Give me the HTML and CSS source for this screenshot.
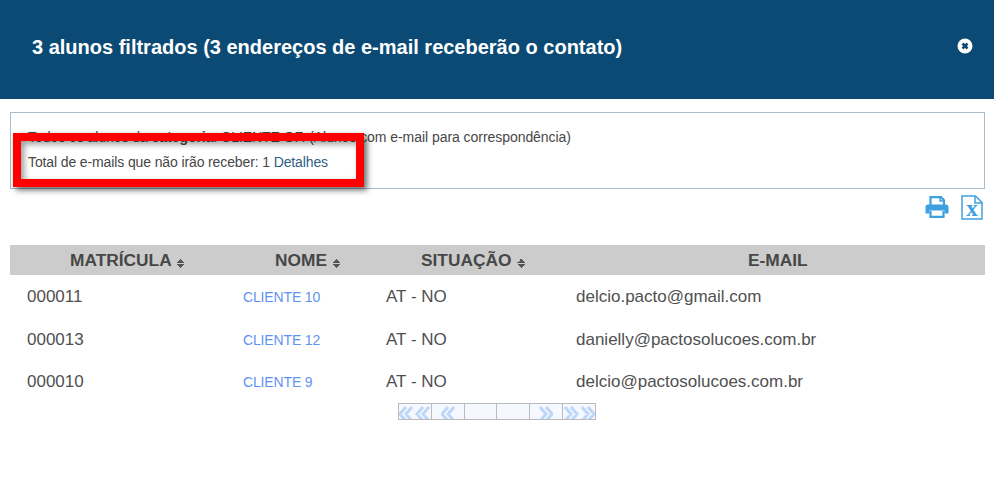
FILE: index.html
```html
<!DOCTYPE html>
<html lang="pt">
<head>
<meta charset="utf-8">
<title>Alunos filtrados</title>
<link rel="stylesheet" href="styles.css">
</head>
<body>
<header class="modal-header">
  <h1 class="modal-title">3 alunos filtrados (3 endereços de e-mail receberão o contato)</h1>
  <svg class="close-icon" viewBox="0 0 16 16" width="16" height="16" aria-label="Fechar">
    <circle cx="8" cy="8" r="7.500" fill="#fff"/>
    <path d="M5.500 5.500l5 5M10.500 5.500l-5 5" stroke="#0a4a75" stroke-width="2.600"/>
  </svg>
</header>
<main class="content">
  <section class="info-box">
    <p class="info-line info-all">Todos os alunos da <b class="info-strong">categoria</b>: CLIENTE OF. (Alunos com e-mail para correspondência)</p>
    <p class="info-line info-total">Total de e-mails que não irão receber: 1 <a class="detail-link" href="#">Detalhes</a></p>
    <div class="highlight"></div>
  </section>
  <div class="toolbar">
    <svg class="tool-icon" viewBox="0 0 24 22" width="24" height="22" aria-label="Imprimir">
      <path d="M5.500 9V1.200h10.500l3 3V9" fill="none" stroke="#3fa0e0" stroke-width="2.200"/>
      <path d="M15 1v4h4" fill="none" stroke="#3fa0e0" stroke-width="1.500"/>
      <path d="M0.500 11a2.500 2.500 0 0 1 2.500-2.500h18a2.500 2.500 0 0 1 2.500 2.500v6.500h-4v-3H4.500v3h-4z" fill="#3fa0e0"/>
      <path d="M5.500 15v5.900h13V15" fill="none" stroke="#3fa0e0" stroke-width="2.200"/>
    </svg>
    <svg class="tool-icon" viewBox="0 0 22 25" width="22" height="25" aria-label="Excel">
      <path d="M1 1h13.500L21 7.500V24H1z" fill="#fff" stroke="#3fa0e0" stroke-width="1.500"/>
      <path d="M14 1v7h7" fill="none" stroke="#3fa0e0" stroke-width="1.500"/>
      <text x="11" y="21" class="excel-x">x</text>
    </svg>
  </div>
  <table class="data-table">
    <thead>
      <tr>
        <th class="col-mat">MATRÍCULA <span class="sort"></span></th>
        <th class="col-nome">NOME <span class="sort"></span></th>
        <th class="col-sit">SITUAÇÃO <span class="sort"></span></th>
        <th class="col-email">E-MAIL</th>
      </tr>
    </thead>
    <tbody>
      <tr><td class="cell-mat">000011</td><td class="cell-nome"><a href="#">CLIENTE 10</a></td><td class="cell-sit">AT - NO</td><td class="cell-email">delcio.pacto@gmail.com</td></tr>
      <tr><td class="cell-mat">000013</td><td class="cell-nome"><a href="#">CLIENTE 12</a></td><td class="cell-sit">AT - NO</td><td class="cell-email">danielly@pactosolucoes.com.br</td></tr>
      <tr><td class="cell-mat">000010</td><td class="cell-nome"><a href="#">CLIENTE 9</a></td><td class="cell-sit">AT - NO</td><td class="cell-email">delcio@pactosolucoes.com.br</td></tr>
    </tbody>
  </table>
  <nav class="pager" aria-label="Paginação">
    <span class="page-btn"><svg class="chev" viewBox="0 0 32 16" width="32" height="16"><path d="M7 3L1 10l6 7M13 3L7 10l6 7M24 3l-6 7 6 7M30 3l-6 7 6 7"/></svg></span>
    <span class="page-btn"><svg class="chev" viewBox="0 0 14 16" width="14" height="16"><path d="M7 3L1 10l6 7M13 3L7 10l6 7"/></svg></span>
    <span class="page-btn"></span>
    <span class="page-btn"></span>
    <span class="page-btn"><svg class="chev" viewBox="0 0 14 16" width="14" height="16"><path d="M1 3l6 7-6 7M7 3l6 7-6 7"/></svg></span>
    <span class="page-btn"><svg class="chev" viewBox="0 0 32 16" width="32" height="16"><path d="M2 3l6 7-6 7M8 3l6 7-6 7M19 3l6 7-6 7M25 3l6 7-6 7"/></svg></span>
  </nav>
</main>
</body>
</html>
```

FILE: styles.css
```css
* { box-sizing: border-box; }
html, body { margin: 0; padding: 0; }
body { background: #fff; font-family: "Liberation Sans", Arial, sans-serif; color: #474747; }

.modal-header {
  height: 99px;
  background: #0a4a75;
  display: flex;
  align-items: center;
  justify-content: space-between;
  padding: 0 21px 5px 32px;
}
.modal-title { margin: 0; color: #fff; font-size: 20px; font-weight: 700; }
.close-icon { display: block; margin-top: -3px; }

.content { padding: 13px 9px 0 10px; }

.info-box {
  position: relative;
  height: 77px;
  border: 1px solid #a8bccd;
  padding: 17px 17px 0;
}
.info-line { margin: 0 0 10px; font-size: 14px; line-height: 15px; color: #474747; }
.info-all { letter-spacing: -0.05px; }
.info-strong { font-weight: 700; }
.info-total { letter-spacing: -0.12px; }
.detail-link { color: #2f5f85; text-decoration: none; }
.highlight {
  position: absolute;
  left: 2px;
  top: 20px;
  width: 351px;
  height: 54px;
  border: 8px solid #f00;
  box-shadow: 3px 3px 6px rgba(0,0,0,.6), inset 3px 3px 6px rgba(0,0,0,.4);
}

.toolbar {
  display: flex;
  justify-content: flex-end;
  align-items: center;
  gap: 12px;
  height: 36px;
  padding-right: 2px;
}
.tool-icon { display: block; }
.excel-x { font: 700 23px "Liberation Serif", serif; fill: #3fa0e0; text-anchor: middle; }

.data-table { width: 100%; margin-top: 20px; border-collapse: collapse; table-layout: fixed; }
.data-table th {
  height: 30px;
  padding: 1px 0 0;
  background: #ccc;
  font-size: 17.330px;
  font-weight: 700;
  color: #474747;
  text-align: left;
}
.col-mat { width: 195px; padding-left: 60px !important; }
.col-nome { width: 160px; padding-left: 70px !important; }
.col-sit { width: 180px; padding-left: 56px !important; }
.col-email { padding-left: 203px !important; }
.sort {
  display: inline-block;
  width: 8px;
  height: 9px;
  margin-left: 1px;
  vertical-align: -2px;
  background:
    linear-gradient(to bottom right, transparent 50%, #555 50%) 0 0 / 4px 4px no-repeat,
    linear-gradient(to bottom left, transparent 50%, #555 50%) 100% 0 / 4px 4px no-repeat,
    linear-gradient(to top right, transparent 50%, #555 50%) 0 100% / 4px 4px no-repeat,
    linear-gradient(to top left, transparent 50%, #555 50%) 100% 100% / 4px 4px no-repeat;
}
.data-table td { height: 42.500px; padding: 2px 0 0; font-size: 17px; color: #505050; }
.cell-mat { padding-left: 17px !important; }
.cell-nome { padding-left: 38px !important; }
.cell-nome a { font-size: 14px; letter-spacing: -0.15px; color: #5f93f2; text-decoration: none; }
.cell-sit { padding-left: 21px !important; }
.cell-email { padding-left: 31px !important; }

.pager {
  display: flex;
  width: 198px;
  height: 17px;
  margin: 0 0 0 388px;
  border: 1px solid #bbb;
  background: #f5f8ff;
}
.page-btn {
  flex: 1;
  display: flex;
  align-items: flex-start;
  justify-content: center;
  border-left: 1px solid #bbb;
  overflow: hidden;
}
.page-btn:first-child { border-left: 0; }
.chev { display: block; flex: none; }
.chev path { fill: none; stroke: #bcd7f8; stroke-width: 3; }
```
